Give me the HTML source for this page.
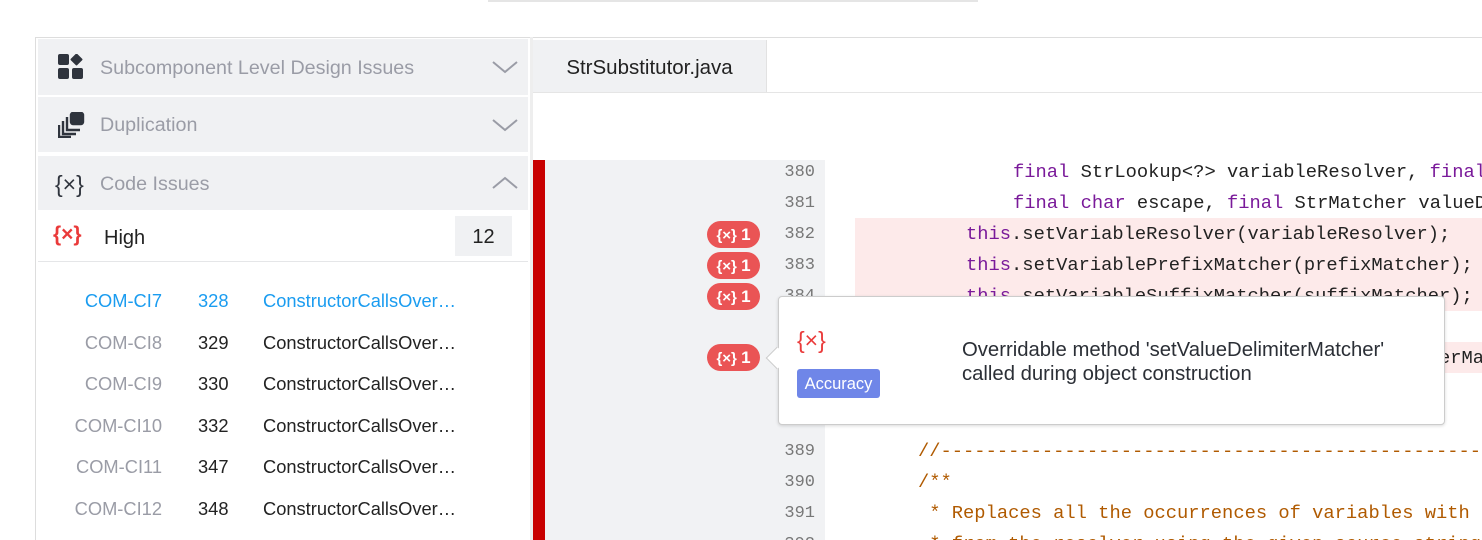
<!DOCTYPE html>
<html><head><meta charset="utf-8"><style>
*{margin:0;padding:0;box-sizing:border-box}
html,body{width:1482px;height:540px;overflow:hidden}
body{background:#fff;font-family:"Liberation Sans",sans-serif;position:relative}
#w{position:absolute;left:0;top:0;width:1482px;height:540px;overflow:hidden}
.a{position:absolute}
.hdr{position:absolute;left:38px;width:490px;background:#f0f1f3;color:#9a9ca6;font-size:19.7px}
.hdr span{position:absolute;left:62px}
.chev{position:absolute;right:10px;top:50%;margin-top:-7px}
.row{position:absolute;left:38px;width:490px;height:22px;font-size:18.3px;color:#222}
.row .id{position:absolute;right:366px;color:#9a9ca6}
.row .n{position:absolute;left:160px}
.row .t{position:absolute;left:225px}
.code{position:absolute;font-family:"Liberation Mono",monospace;font-size:18.77px;color:#222;white-space:pre;line-height:31px;height:31px}
.ln{position:absolute;left:760px;width:55px;text-align:right;font-family:"Liberation Mono",monospace;font-size:17px;color:#777;line-height:31px}
.k{color:#7a1a9a}.c{color:#b05a00}
.bd{position:absolute;left:707px;width:53px;height:27px;border-radius:14px;background:#ea5455;color:#fff;font-size:15px;font-weight:bold;line-height:27px;text-align:center}
.bd b{font-size:17px}
</style></head><body><div id="w">
<div class="a" style="left:488px;top:0;width:490px;height:2px;background:#e5e5e5"></div>
<div class="a" style="left:35px;top:37px;width:1447px;height:1px;background:#ddd"></div>
<div class="a" style="left:35px;top:37px;width:1px;height:503px;background:#ddd"></div>
<div class="a" style="left:530px;top:37px;width:3px;height:503px;background:#eee"></div>

<div class="hdr" style="top:39px;height:56px;line-height:58px">
<svg class="a" style="left:20px;top:15px" width="26" height="26" viewBox="0 0 26 26" fill="#2f343d"><rect x="0" y="0" width="11" height="11" rx="2"/><rect x="14" y="1" width="9" height="9" rx="1" transform="rotate(45 18.5 5.5)"/><rect x="0" y="14" width="11" height="11" rx="2"/><rect x="14" y="14" width="11" height="11" rx="2"/></svg>
<span>Subcomponent Level Design Issues</span>
<svg class="chev" width="26" height="14" viewBox="0 0 26 14"><path d="M1 2l12 10 12-10" fill="none" stroke="#9a9ca6" stroke-width="2"/></svg></div>
<div class="hdr" style="top:97px;height:55px;line-height:57px">
<svg class="a" style="left:20px;top:15px" width="28" height="26" viewBox="0 0 28 26" fill="none" stroke="#2f343d" stroke-width="2.4"><rect x="13" y="1" width="12" height="11" rx="2" fill="#2f343d"/><path d="M9 5h0v13h13M5 9v13h13M1 13v12h12"/></svg>
<span>Duplication</span>
<svg class="chev" width="26" height="14" viewBox="0 0 26 14"><path d="M1 2l12 10 12-10" fill="none" stroke="#9a9ca6" stroke-width="2"/></svg></div>
<div class="hdr" style="top:156px;height:54px;line-height:56px">
<span style="left:17px;color:#2f343d;font-size:23px">{×}</span>
<span>Code Issues</span>
<svg class="chev" width="26" height="14" viewBox="0 0 26 14"><path d="M1 12l12-10 12 10" fill="none" stroke="#9a9ca6" stroke-width="2"/></svg></div>
<div class="a" style="left:53px;top:223px;color:#ea3a3a;font-size:21px;font-weight:bold">{×}</div>
<div class="a" style="left:104px;top:227px;font-size:20px;color:#222">High</div>
<div class="a" style="left:455px;top:216px;width:57px;height:40px;background:#f0f1f3;text-align:center;line-height:42px;font-size:20px;color:#222">12</div>
<div class="a" style="left:38px;top:261px;width:490px;height:1px;background:#e5e6e8"></div>

<div class="row" style="top:290px;color:#1a9cf0"><span class="id" style="color:#1a9cf0">COM-CI7</span><span class="n">328</span><span class="t">ConstructorCallsOver…</span></div>
<div class="row" style="top:332px"><span class="id">COM-CI8</span><span class="n">329</span><span class="t">ConstructorCallsOver…</span></div>
<div class="row" style="top:373px"><span class="id">COM-CI9</span><span class="n">330</span><span class="t">ConstructorCallsOver…</span></div>
<div class="row" style="top:415px"><span class="id">COM-CI10</span><span class="n">332</span><span class="t">ConstructorCallsOver…</span></div>
<div class="row" style="top:456px"><span class="id">COM-CI11</span><span class="n">347</span><span class="t">ConstructorCallsOver…</span></div>
<div class="row" style="top:498px"><span class="id">COM-CI12</span><span class="n">348</span><span class="t">ConstructorCallsOver…</span></div>

<div class="a" style="left:533px;top:40px;width:234px;height:52px;background:#f0f1f3;border-right:1px solid #e2e2e2;font-size:20.5px;color:#222;text-align:center;line-height:56px">StrSubstitutor.java</div>
<div class="a" style="left:533px;top:92px;width:949px;height:1px;background:#e5e5e5"></div>
<div class="a" style="left:533px;top:160px;width:12px;height:380px;background:#c80000"></div>
<div class="a" style="left:545px;top:160px;width:280px;height:380px;background:#f1f2f4"></div>
<div class="a" style="left:855px;top:218px;width:627px;height:93px;background:#fdeaea"></div>
<div class="a" style="left:855px;top:342px;width:627px;height:31px;background:#fdeaea"></div>

<div class="ln" style="top:157px">380</div><div class="ln" style="top:188px">381</div><div class="ln" style="top:219px">382</div><div class="ln" style="top:250px">383</div><div class="ln" style="top:281px">384</div><div class="ln" style="top:405px">388</div><div class="ln" style="top:436px">389</div><div class="ln" style="top:467px">390</div><div class="ln" style="top:498px">391</div><div class="ln" style="top:529px">392</div>

<div class="code" style="left:1013px;top:157px"><span class="k">final</span> StrLookup&lt;?&gt; variableResolver, <span class="k">final</span> StrMatcher prefixMatcher,</div>
<div class="code" style="left:1013px;top:188px"><span class="k">final</span> <span class="k">char</span> escape, <span class="k">final</span> StrMatcher valueDelimiterMatcher) {</div>
<div class="code" style="left:966px;top:219px"><span class="k">this</span>.setVariableResolver(variableResolver);</div>
<div class="code" style="left:966px;top:250px"><span class="k">this</span>.setVariablePrefixMatcher(prefixMatcher);</div>
<div class="code" style="left:966px;top:281px"><span class="k">this</span>.setVariableSuffixMatcher(suffixMatcher);</div>
<div class="code" style="left:966px;top:343px"><span class="k">this</span>.setValueDelimiterMatcher(valueDelimiterMatcher);</div>
<div class="code c" style="left:918px;top:436px">//-----------------------------------------------------------------------</div>
<div class="code c" style="left:918px;top:467px">/**</div>
<div class="code c" style="left:918px;top:498px"> * Replaces all the occurrences of variables with their matching values</div>
<div class="code c" style="left:918px;top:529px"> * from the resolver using the given source string as a template.</div>

<div class="bd" style="top:221px">{×} <b>1</b></div>
<div class="bd" style="top:252px">{×} <b>1</b></div>
<div class="bd" style="top:283px">{×} <b>1</b></div>
<div class="bd" style="top:344px">{×} <b>1</b></div>

<div class="a" style="left:778px;top:296px;width:667px;height:129px;background:#fff;border:1px solid #ccc;border-radius:4px;box-shadow:0 1px 3px rgba(0,0,0,.15)"></div>
<div class="a" style="left:769px;top:350px;width:16px;height:16px;background:#fff;border-left:1px solid #ccc;border-bottom:1px solid #ccc;transform:rotate(45deg)"></div>
<div class="a" style="left:797px;top:327px;color:#ea3a3a;font-size:23px">{×}</div>
<div class="a" style="left:797px;top:369px;width:83px;height:29px;background:#6f86e8;border-radius:3px;color:#fff;font-size:16.5px;text-align:center;line-height:30px">Accuracy</div>
<div class="a" style="left:962px;top:338px;font-size:20.3px;color:#2b2f36;line-height:24px;white-space:nowrap">Overridable method 'setValueDelimiterMatcher'<br>called during object construction</div>
</div></body></html>
